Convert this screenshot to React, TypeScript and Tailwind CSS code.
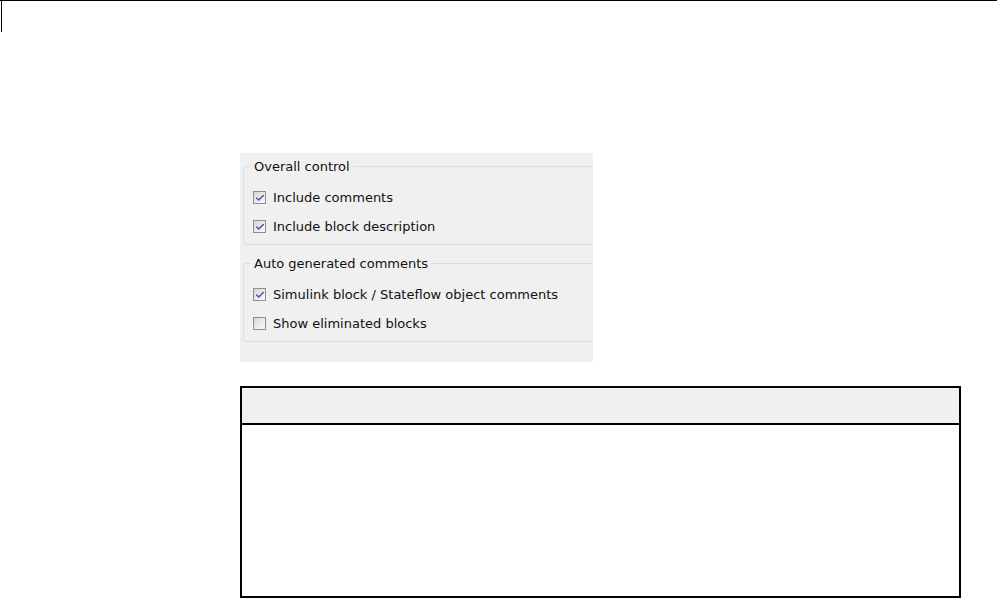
import { Check } from 'lucide-react';

interface Option {
  label: string;
  checked: boolean;
}

const groups: { title: string; options: Option[] }[] = [
  {
    title: 'Overall control',
    options: [
      { label: 'Include comments', checked: true },
      { label: 'Include block description', checked: true },
    ],
  },
  {
    title: 'Auto generated comments',
    options: [
      { label: 'Simulink block / Stateflow object comments', checked: true },
      { label: 'Show eliminated blocks', checked: false },
    ],
  },
];

function Box({ checked }: { checked: boolean }) {
  return (
    <span className="w-[13px] h-[13px] flex-none border border-[#8f8f8f] bg-gradient-to-br from-[#d6d6d6] to-[#fbfbfb] flex items-center justify-center">
      {checked && <Check size={10} strokeWidth={3.5} className="text-[#3d5a9e]" />}
    </span>
  );
}

function Group({ title, options }: { title: string; options: Option[] }) {
  return (
    <div className="relative ml-[3px] -mr-2 border border-[#d5dfe5] rounded-[3px] pt-[22px] pb-[9px] pl-[9px]">
      <span className="absolute -top-[9px] left-[7px] px-[3px] bg-[#f0f0f0] leading-[17px]">{title}</span>
      <div className="flex flex-col gap-[12px]">
        {options.map((o) => (
          <div key={o.label} className="flex items-center gap-[7px] h-[17px]">
            <Box checked={o.checked} />
            <span>{o.label}</span>
          </div>
        ))}
      </div>
    </div>
  );
}

export default function App() {
  return (
    <div className="w-[997px] h-[598px] bg-white overflow-hidden relative">
      <div className="h-[32px] border-t border-black">
        <div className="ml-px h-full border-l border-black" />
      </div>
      <div
        className="ml-[240px] mt-[121px] w-[353px] h-[209px] bg-[#f0f0f0] overflow-hidden text-[13px] text-[#111] pt-[13px] flex flex-col gap-[18px]"
        style={{ fontFamily: 'Tahoma, "DejaVu Sans", sans-serif' }}
      >
        {groups.map((g) => (
          <Group key={g.title} title={g.title} options={g.options} />
        ))}
      </div>
      <div className="ml-[240px] mt-[24px] w-[721px] h-[212px] border-2 border-black flex flex-col">
        <div className="h-[37px] flex-none bg-[#f0f0f0] border-b-2 border-black" />
        <div className="flex-1" />
      </div>
    </div>
  );
}
